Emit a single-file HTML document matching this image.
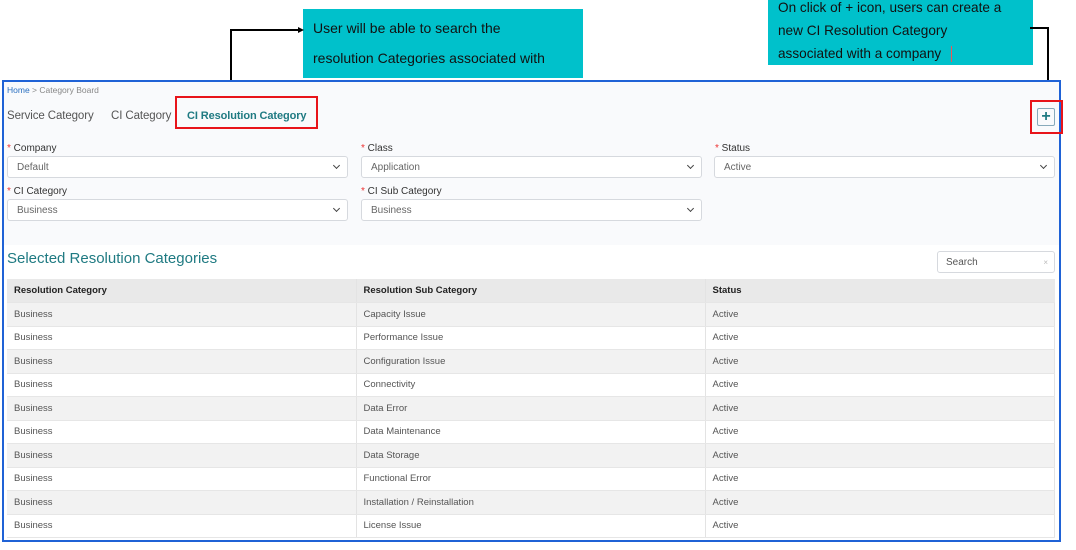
<!DOCTYPE html>
<html><head><meta charset="utf-8"><style>
*{box-sizing:border-box;margin:0;padding:0}
body{width:1076px;height:550px;background:#fff;position:relative;font-family:"Liberation Sans",sans-serif;overflow:hidden}
.a{position:absolute}
.frame{left:2px;top:80px;width:1059px;height:462px;border:2px solid #1f62d6;background:#fff}
.formbg{left:4px;top:82px;width:1055px;height:163px;background:#f9fafc}
.lbl{font-size:10px;color:#333}
.lbl b{color:#e33;font-weight:normal}
.sel{height:22px;border:1px solid #d6d9de;border-radius:3px;background:#fff;font-size:10px;color:#666;padding:5px 0 0 9px}
.sel:after{content:"";position:absolute;right:8px;top:6px;width:4px;height:4px;border-right:1.3px solid #444;border-bottom:1.3px solid #444;transform:rotate(45deg)}
.call{background:#00c1cb;color:#111;font-size:14px}
table{position:absolute;left:7px;top:279px;width:1048px;border-collapse:collapse;font-size:9.5px;color:#555}
td,th{height:23.5px;padding:0 7px;text-align:left;border-right:1px solid #e3e3e3;border-bottom:1px solid #e6e6e6}
th{background:#e9e9e9;color:#222;font-weight:bold}
tr:nth-child(even) td{background:#f2f2f2}
td:first-child,th:first-child{width:349px}
td:nth-child(2),th:nth-child(2){width:349px}
.tab{font-size:11.5px;color:#555;letter-spacing:-0.1px}
</style></head><body>
<div class="a call" style="left:303px;top:9px;width:280px;height:69px"><div class="a" style="left:10px;top:11px">User will be able to search the</div><div class="a" style="left:10px;top:41px">resolution Categories associated with</div></div>
<div class="a call" style="left:768px;top:0;width:265px;height:69px;line-height:23px;padding:0 0 0 10px;margin-top:-4px;font-size:13.6px">On click of + icon, users can create a<br>new CI Resolution Category<br>associated with a company <span style="display:inline-block;width:1px;height:16px;background:#e55;vertical-align:middle;margin-left:6px"></span></div>
<svg class="a" style="left:0;top:0" width="1076" height="140"><path d="M231 92V30H300" fill="none" stroke="#000" stroke-width="2"/><path d="M304 30l-6-3v6z" fill="#000"/><path d="M1030 28H1048V100" fill="none" stroke="#000" stroke-width="2"/></svg>
<div class="a frame"></div>
<div class="a formbg"></div>
<div class="a" style="left:7px;top:85px;font-size:8.5px;color:#888"><span style="color:#2a6fc0">Home</span> &gt; Category Board</div>
<div class="a tab" style="left:7px;top:110px">Service Category</div>
<div class="a tab" style="left:111px;top:110px">CI Category</div>
<div class="a tab" style="left:187px;top:110px;color:#1f7a82;font-weight:bold;font-size:11px">CI Resolution Category</div>
<div class="a" style="left:175px;top:96px;width:143px;height:33px;border:2.5px solid #e8141a"></div>
<div class="a" style="left:1030px;top:100px;width:33px;height:34px;border:2.5px solid #e8141a"></div>
<div class="a" style="left:1037px;top:108px;width:18px;height:18px;border:1px solid #8ab;border-radius:2px;color:#1f7a82;font-size:16px;font-weight:bold;text-align:center;line-height:16px">+</div>
<div class="a lbl" style="left:7px;top:143px"><b>*</b> Company</div>
<div class="a lbl" style="left:361px;top:143px"><b>*</b> Class</div>
<div class="a lbl" style="left:715px;top:143px"><b>*</b> Status</div>
<div class="a sel" style="left:7px;top:156px;width:341px">Default</div>
<div class="a sel" style="left:361px;top:156px;width:341px">Application</div>
<div class="a sel" style="left:714px;top:156px;width:341px">Active</div>
<div class="a lbl" style="left:7px;top:186px"><b>*</b> CI Category</div>
<div class="a lbl" style="left:361px;top:186px"><b>*</b> CI Sub Category</div>
<div class="a sel" style="left:7px;top:199px;width:341px">Business</div>
<div class="a sel" style="left:361px;top:199px;width:341px">Business</div>
<div class="a" style="left:7px;top:250px;font-size:15px;color:#1f7a82">Selected Resolution Categories</div>
<div class="a" style="left:937px;top:251px;width:118px;height:22px;border:1px solid #d6d9de;border-radius:3px;font-size:10px;color:#555;padding:5px 0 0 8px">Search<span style="position:absolute;right:6px;top:6px;color:#bbb;font-size:8px">×</span></div>
<table>
<tr><th>Resolution Category</th><th>Resolution Sub Category</th><th style="border-right:none">Status</th></tr>
<tr><td>Business</td><td>Capacity Issue</td><td>Active</td></tr>
<tr><td>Business</td><td>Performance Issue</td><td>Active</td></tr>
<tr><td>Business</td><td>Configuration Issue</td><td>Active</td></tr>
<tr><td>Business</td><td>Connectivity</td><td>Active</td></tr>
<tr><td>Business</td><td>Data Error</td><td>Active</td></tr>
<tr><td>Business</td><td>Data Maintenance</td><td>Active</td></tr>
<tr><td>Business</td><td>Data Storage</td><td>Active</td></tr>
<tr><td>Business</td><td>Functional Error</td><td>Active</td></tr>
<tr><td>Business</td><td>Installation / Reinstallation</td><td>Active</td></tr>
<tr><td>Business</td><td>License Issue</td><td>Active</td></tr>
</table>
</body></html>
